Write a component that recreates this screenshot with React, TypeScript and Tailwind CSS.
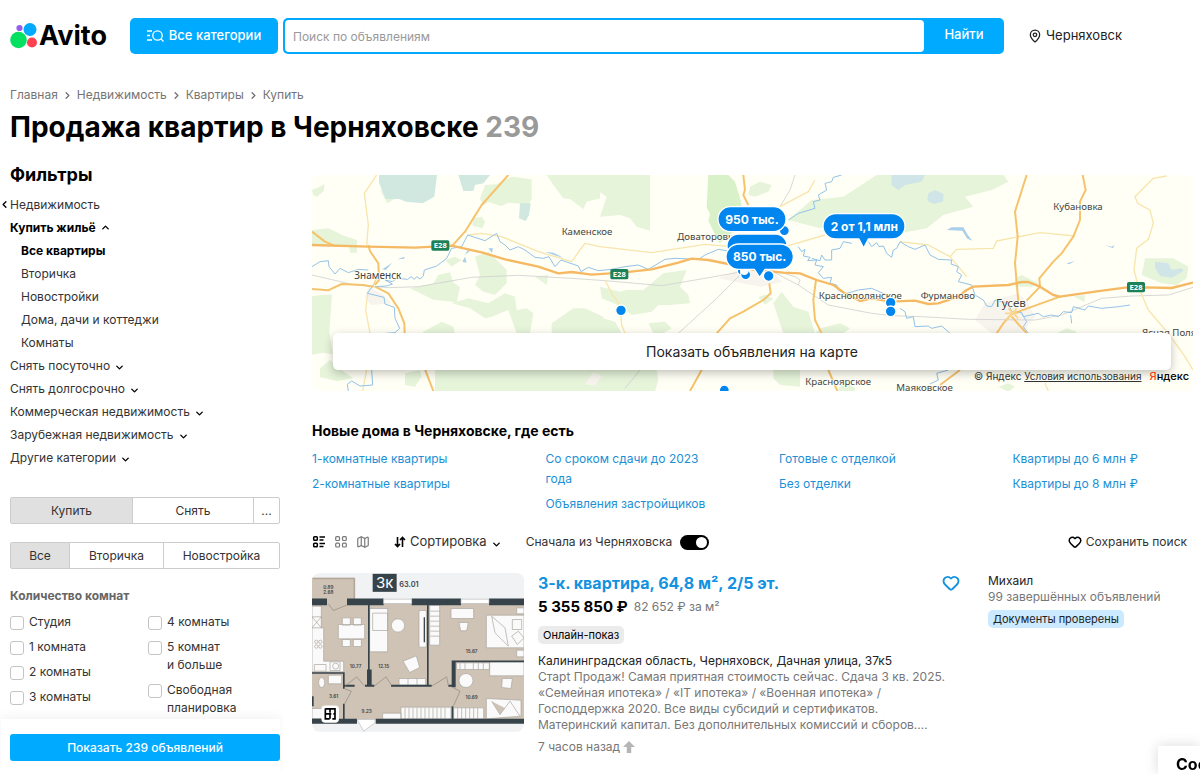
import { ChevronDown, ChevronLeft, ChevronRight, ChevronUp, Heart, Map, MapPin } from 'lucide-react'

const crumbs = ['Главная', 'Недвижимость', 'Квартиры', 'Купить']

const subcategories = ['Вторичка', 'Новостройки', 'Дома, дачи и коттеджи', 'Комнаты']

const categories = [
  'Снять посуточно',
  'Снять долгосрочно',
  'Коммерческая недвижимость',
  'Зарубежная недвижимость',
  'Другие категории',
]

const rooms = [
  ['Студия', '1 комната', '2 комнаты', '3 комнаты'],
  ['4 комнаты', '5 комнат и\u00a0больше', 'Свободная планировка'],
]

const houseLinks = [
  ['1-комнатные квартиры', '2-комнатные квартиры'],
  ['Со сроком сдачи до 2023 года', 'Объявления застройщиков'],
  ['Готовые с отделкой', 'Без отделки'],
  ['Квартиры до 6 млн ₽', 'Квартиры до 8 млн ₽'],
]

function Header() {
  return (
    <header className="flex h-[72px] items-center pl-[10px]">
      <a href="#" className="flex w-[120px] items-center gap-[2px]">
        <svg viewBox="0 0 27 26" className="h-[26px] w-[27px] shrink-0">
          <circle cx="8.5" cy="17" r="8.3" fill="#04e061" />
          <circle cx="20" cy="6.5" r="6.5" fill="#00aaff" />
          <circle cx="22" cy="19.5" r="5" fill="#ff4053" />
          <circle cx="9.5" cy="5" r="3.1" fill="#965eeb" />
        </svg>
        <span className="text-[27px] leading-8 font-bold">Avito</span>
      </a>
      <button className="flex h-9 w-[148px] items-center justify-center gap-[5px] rounded-[5px] bg-[#00aaff] text-[13px] font-medium text-white">
        <svg viewBox="0 0 17 14" className="h-[14px] w-[17px]" fill="none" stroke="currentColor" strokeWidth="1.3">
          <path d="M0 2h5M0 6.5h3M0 11h5" />
          <circle cx="10.5" cy="6.5" r="4.7" />
          <path d="m14 10 2.5 2.5" />
        </svg>
        Все категории
      </button>
      <form className="ml-[5px] flex h-9 flex-1 rounded-[5px] bg-[#00aaff] p-[2px] pr-0">
        <input
          aria-label="Поиск"
          placeholder="Поиск по объявлениям"
          className="min-w-0 flex-1 rounded-[4px] bg-white px-2 pt-[2px] text-[12px] outline-none placeholder:text-[#999]"
        />
        <button type="button" className="w-20 pb-[2px] text-[13px] font-medium text-white">
          Найти
        </button>
      </form>
      <a href="#" className="ml-6 flex w-[172px] items-center gap-1 text-[13px] text-[#222]">
        <MapPin className="h-[14px] w-[14px]" strokeWidth={2.2} />
        Черняховск
      </a>
    </header>
  )
}

function Sidebar() {
  return (
    <aside className="mt-px flex w-[270px] shrink-0 flex-col text-[12px] text-[#333]">
      <h2 className="text-[18px] leading-7 font-bold text-black">Фильтры</h2>
      <nav className="mt-1 flex flex-col leading-[23px]">
        <a href="#" className="-ml-[11px] flex items-center">
          <ChevronLeft className="h-[11px] w-[11px] text-black" strokeWidth={3} />
          Недвижимость
        </a>
        <a href="#" className="flex items-center gap-1 font-bold text-black">
          Купить жильё
          <ChevronUp className="h-[11px] w-[11px]" strokeWidth={3} />
        </a>
        <a href="#" className="pl-[11px] font-bold text-black">
          Все квартиры
        </a>
        {subcategories.map((name) => (
          <a key={name} href="#" className="pl-[11px]">
            {name}
          </a>
        ))}
        {categories.map((name) => (
          <a key={name} href="#" className="flex items-center gap-1">
            {name}
            <ChevronDown className="mt-1 h-[11px] w-[11px] text-black" strokeWidth={3} />
          </a>
        ))}
      </nav>

      <div className="mt-7 flex h-[27px] rounded-[2px] border border-[#ccc]">
        <button className="flex-1 border-r border-[#ccc] bg-[#e0e0e0]">Купить</button>
        <button className="w-[120px]">Снять</button>
        <button className="w-[26px] border-l border-[#ccc]">...</button>
      </div>
      <div className="mt-[18px] flex h-[27px] rounded-[2px] border border-[#ccc]">
        <button className="w-[58px] bg-[#e0e0e0]">Все</button>
        <button className="w-[95px] border-x border-[#ccc]">Вторичка</button>
        <button className="flex-1">Новостройка</button>
      </div>

      <h3 className="mt-[17px] leading-5 font-bold text-[#666]">Количество комнат</h3>
      <div className="mt-[7px] flex leading-[18px]">
        {rooms.map((column) => (
          <div key={column[0]} className="flex w-[138px] shrink-0 flex-col gap-[7px]">
            {column.map((name) => (
              <label key={name} className="flex items-start gap-[5px]">
                <input
                  type="checkbox"
                  className="mt-[3px] h-[14px] w-[14px] shrink-0 appearance-none rounded-[3px] border border-[#c4c4c4]"
                />
                <span className="max-w-[84px]">{name}</span>
              </label>
            ))}
          </div>
        ))}
      </div>
      <div className="mt-[2px] -ml-[9px] bg-white pt-[15px] pb-3 pl-[9px] shadow-[0_-4px_8px_rgba(0,0,0,0.04)]">
        <button className="h-[27px] w-full rounded-[3px] bg-[#00aaff] font-medium text-white">
          Показать 239 объявлений
        </button>
      </div>
    </aside>
  )
}

function RoadSign({ x, y }: { x: number; y: number }) {
  return (
    <g>
      <rect x={x} y={y} width="54" height="31" rx="5" fill="#1c8158" />
      <text x={x + 27} y={y + 24} fontSize="23" fontWeight="700" fill="#fff" textAnchor="middle">
        E28
      </text>
    </g>
  )
}

function MapDrawing() {
  return (
    <svg
      viewBox="21 15 2643 648"
      preserveAspectRatio="xMidYMid slice"
      className="h-full w-full font-['Noto_Sans',sans-serif]"
      fill="none"
      strokeLinejoin="round"
    >
      <rect x="21" y="15" width="2643" height="648" fill="#fffff5" />

      {/* forests */}
      <g fill="#e6f4da">
        <path d="M21 60l20-8 18-10-3 22-20 16-12-5zM21 180l50-5 40 20 45 15v38h-20l-5-22-110-4zM21 378l60-5-8 110 10 70-30-5-32 6zM45 595l30-25 20 20 50 35-50 8-50-12z" />
        <path d="M225 60l22 40 20-12zM540 45l35-2 45-23 60 8v60l-10 15-60-5-20 10-40-12-15 10-10-20zM725 15h160v70l-40 10-10 22-40-30-20-2-30-40zM505 145l25-5 10 15-8 20-30-8z" />
        <path d="M315 355l70-15 15-25 35-8 10 30 20 15-10 45-70-8zM420 270l30-10 20 10-30 20zM510 260l40-15 35 35 20 20v40l-35 35-35-10-25-20 15-30zM440 400l50-15 60 15 50-30 30 10 5 40 30-5 20 15-10 60h-40l-25-70-50 20-20 5-45-30zM690 320l40-5-5 30zM740 460l65-45h35l55 25v50H740zM355 485l55-30 35 15 5 25h-100z" />
        <path d="M300 610l45-10 5 20-20 30-30-5zM390 598h495v65H390z" />
        <path d="M870 15h165v167l-40-12-20-25-30-10-60 5 20-60-30-20zM885 350l60 15 20-5 50 0 60-50 70-10-20 50 25 25 5 25-65 5-30 0-20 20-60 10-30-25-60-25zM1030 460l50-5 20 20-25 15h-30zM885 455l10-10 35 10 20 35h-65zM885 600h170l5 30-10 33H885z" />
        <path d="M1335 50l30-15 35 10-10 20-40 15-20-5zM1360 382l20-8 25 12-25 18zM1405 400l25-35 35 45 45 15 20 65h-95zM1530 490l15-15 60-15 30 15-20 15z" />
        <path d="M1450 150l70-60 95-10 100-65h380l15 20-50 25-80 20 25 30-90 25-50 40-80 15-60-15-20-15-90-10-70 25z" />
        <path d="M2130 325l20-10 50 25-20 10h-50zM2255 490l30-15 30 10-5 8zM2520 265h85l45 25-5 35-30 20-45-5-60-25zM2305 378l35-3-2 22z" />
        <path d="M1405 600h80v50l-60-5-20-20zM1600 655l20-20 30 20v8h-50zM2080 650l30-10 20 10-20 15z" />
      </g>
      <path fill="#d9f1c8" d="M1210 15h60l20 20 15 50 8 35-20 60-50 40-33-68 5-20-10-20z" />
      <path fill="#d0e8df" d="M222 15h174l-8 65-35 20-50-5-20-8-40 0-10-20-11-30zM460 15h95l-20 25-25 5-5 18-30 0zM645 100h32l-5 35-10 18-20-8z" />
      <path fill="#cfe5e8" d="M1760 15h100l-10 20-50 10-20 15-20-15zM1870 70l20-10 25 12v22l-28 8-20-10zM2550 275l40 5 10 20 30-5 5 8-35 20-35-5-15-25z" />
      <path
        fill="#f7f4ee"
        d="M190 350l40 20 30 30-60 5-20-20zM1240 325l60-25 110 10 20 25-60 15-60-10zM2010 450l30-50 100-30 30 30 20 40-40 50h-90zM865 607l25 10-20 30-30-5z"
      />

      {/* railways */}
      <g stroke="#d0d0d0" strokeWidth="2.5">
        <path d="M21 315L150 345 250 353 340 350 500 322 640 316 800 325 900 332 1070 347 1200 325 1300 307" />
        <path d="M1410 308L1480 345 1570 405 1700 430 1760 437 1850 440 1990 448 2190 450 2270 435 2390 385 2480 378 2590 375 2664 352" />
        <path d="M1120 490L1235 385 1310 310M1420 305l50 15 15 10-5 15M1470 15l-15 45-30 50M960 655l45-55" />
      </g>

      {/* secondary roads */}
      <g stroke="#f8e5ae" strokeWidth="4">
        <path d="M215 15L178 70 190 165 185 225M188 370L182 420 195 490M185 598L173 663M490 195L530 190 590 200 700 245 800 275 825 240 840 220 885 230 1040 248 1200 223 1280 230M900 330L920 370 945 405 950 465 960 490" />
        <path d="M1425 110L1510 65 1530 30M1440 230L1560 195M1785 215L1870 225 1935 260 1985 320M1935 260L1955 238 2065 235 2075 213 2205 188 2310 198M2585 18L2545 25 2490 80 2498 100 2535 120 2545 160 2530 208 2495 235 2487 300 2500 350 2530 420 2590 490 2640 560 2664 600M2220 640L2230 663" />
      </g>

      {/* rivers */}
      <g stroke="#93c2e8" strokeWidth="3">
        <path d="M21 290L45 275 70 272 72 290 90 312 105 295 130 308 160 298 190 300" />
        <path d="M205 345L187 370 237 382 240 402 268 412 270 445 284 475 270 488 240 490M200 598L203 645 165 648 140 633 127 643 130 663" />
        <path d="M210 350L245 348 262 342 240 330 262 335 275 325 308 328 318 320 328 328 335 320 345 327 355 318 358 300 395 288 425 265 440 235 470 230 488 195 540 212 575 190 585 215 600 225 615 240 640 230 660 240 690 262 715 265 732 260 750 290 768 270 820 288 828 305 850 292 880 302 920 298 960 290 1000 285 1030 298 1080 268 1110 265 1180 268 1200 255 1240 238 1270 243" />
        <path d="M1450 150L1480 130 1530 115 1525 95 1545 90 1540 75 1565 60 1560 40 1580 35 1585 22 1610 15" />
        <path d="M1480 230L1490 245 1500 238 1495 258 1515 262 1508 272 1535 270 1530 285 1555 290 1540 308 1555 325 1580 322 1575 340 1595 345 1600 360 1620 372 1660 360 1700 355 1757 380" />
        <path d="M1520 265L1545 272 1550 255 1560 270 1580 270 1580 240 1605 235 1615 215 1640 220M1690 215L1700 230 1715 218 1722 230 1735 228 1745 250 1760 262 1765 240 1775 235 1785 215 1810 230 1830 238 1860 225 1875 255 1900 268 1940 270 1938 282 1960 290 1955 305 1970 315 1960 335 1980 340 2000 345 2010 375 2035 390 2045 408 2060 410 2070 390 2110 400 2120 425" />
        <path d="M2120 425L2150 428 2155 440 2200 430 2215 440 2240 435 2260 440 2275 425 2300 428 2305 410 2340 420 2350 408 2390 415 2440 410 2475 405M2150 430L2165 455 2155 470 2170 490M2297 435L2300 460M1785 415L1800 425 1805 445 1825 440 1830 470 1870 468 1880 475 1910 468 1935 490M1930 600L1895 610 1900 630 1875 642" />
      </g>
      <path
        fill="#a9cfea"
        d="M232 298l30-20-20 22zM278 268l20-8v6zM472 275l8-15 5 18zM480 255l8-15 12-2zM550 235l14 0-3 14zM720 245l25 3 30 15-20-5zM1925 180l15-8 35 0 15 25 12 15-15-6-15-24zM2285 280l25-7-18 10zM2400 225l20 5 8-4-4 9z"
      />

      {/* highways */}
      <g stroke="#f6c36d" strokeWidth="6">
        <path d="M610 15L530 105 480 185 442 227M21 185L60 215 86 226M190 225L195 243 220 280 222 330 210 345M21 357L69 361 110 342 175 345 205 350M210 350L250 370 280 415 298 460 299 490M360 598L385 663" />
        <path d="M1315 15L1320 60 1315 75 1330 105M1393 340L1397 370 1375 390 1315 425 1275 445 1235 490M1533 330L1525 390 1530 450 1550 490M1190 600L1155 663M1570 600L1597 663" />
        <path d="M2165 15L2130 125 2138 200 2130 280 2140 395M2333 15L2342 60 2325 95 2325 150 2305 200 2270 250 2245 275 2203 325 2205 350 2165 392M2265 380L2120 432 2095 460 2075 490M2120 440L2165 490M1965 600L1905 645" />
      </g>
      <path
        stroke="#f5b964"
        strokeWidth="7"
        d="M21 225L190 230 330 233 440 227 530 247 600 268 700 290 760 310 800 306 860 314 950 308 1040 298 1120 278 1160 266 1210 270 1270 282 1350 300 1435 308 1485 310 1535 330 1585 345 1620 370 1665 393 1700 385 1757 395 1830 392 1870 402 1900 400 1960 380 1985 360 2005 350 2110 345 2150 336 2170 336 2205 350 2245 375 2265 380 2370 365 2460 353 2520 352 2600 354 2664 338"
      />
      <path stroke="#f9d78e" strokeWidth="5" d="M215 325l-10 20M2100 430h40M2110 415l30 30M2135 415l-30 35" />

      <g fill="#444" stroke="#fffff5" strokeWidth="4" paintOrder="stroke" fontSize="29">
        <text x="148" y="326" fontSize="30">Знаменск</text>
        <text x="770" y="196">Каменское</text>
        <text x="1117" y="210">Доваторовка</text>
        <text x="1541" y="386">Краснополянское</text>
        <text x="1847" y="388">Фурманово</text>
        <text x="2073" y="411" fontSize="35">Гусев</text>
        <text x="2245" y="120">Кубановка</text>
        <text x="2511" y="499">Ясная Поляна</text>
        <text x="1501" y="646">Красноярское</text>
        <text x="1774" y="664">Маяковское</text>
      </g>
      <RoadSign x={379} y={211} />
      <RoadSign x={916} y={297} />
      <RoadSign x={2466} y={336} />

      {/* price pins */}
      <g fill="#0086ee" stroke="#fff" strokeWidth="4">
        <circle cx="1438" cy="182" r="15" />
        <circle cx="1312" cy="302" r="15" />
        <circle cx="1322" cy="314" r="15" />
        <circle cx="1318" cy="302" r="11" fill="#fff" />
        <circle cx="1391" cy="318" r="16" />
        <circle cx="948" cy="421" r="16" />
        <circle cx="1757" cy="398" r="16" />
        <circle cx="1757" cy="424" r="16" />
        <circle cx="1258" cy="660" r="15" />
        <rect x="1239" y="110" width="204" height="75" rx="37" />
        <rect x="1266" y="192" width="180" height="70" rx="35" />
        <path d="M1301 222h126a38 38 0 0 1 0 76h-47l-16 24-16-24h-47a38 38 0 0 1 0-76z" />
        <path d="M1592 131h170a38 38 0 0 1 0 76h-72l-14 27-14-27h-70a38 38 0 0 1 0-76z" />
      </g>
      <g fill="#fff" fontSize="36" fontWeight="700" textAnchor="middle" className="font-[Inter,sans-serif]">
        <text x="1341" y="161">950 тыс.</text>
        <text x="1364" y="273">850 тыс.</text>
        <text x="1678" y="182">2 от 1,1 млн</text>
      </g>
    </svg>
  )
}

function MapPanel() {
  return (
    <section className="relative h-[216px] overflow-hidden rounded-md">
      <MapDrawing />
      <button className="absolute right-[22px] bottom-[21px] left-[21px] h-[37px] rounded-[5px] bg-white text-[14px] text-[#222] shadow-[0_3px_10px_rgba(0,0,0,0.25)]">
        Показать объявления на карте
      </button>
      <p className="absolute right-1 bottom-[7px] flex items-center gap-2 text-[10px] leading-4 text-[#333]">
        <span>
          © Яндекс{' '}
          <a href="#" className="underline">
            Условия использования
          </a>
        </span>
        <b className="text-[11px] font-medium text-black">
          <span className="text-[#fc3f1d]">Я</span>ндекс
        </b>
      </p>
    </section>
  )
}

function Toolbar() {
  return (
    <div className="mt-[17px] flex h-[22px] items-center text-[12px] text-[#333]">
      <button aria-label="Список" className="text-black">
        <svg viewBox="0 0 14 14" className="h-[14px] w-[14px]" fill="none" stroke="currentColor" strokeWidth="1.5">
          <rect x="1.7" y="1.7" width="3.6" height="3.6" rx=".8" />
          <rect x="1.7" y="8.2" width="3.6" height="3.6" rx=".8" />
          <path d="M7.5 2H13M7.5 5H11.5M7.5 8.5H13M7.5 11.5H11.5" />
        </svg>
      </button>
      <button aria-label="Плитка" className="ml-2 text-[#777]">
        <svg viewBox="0 0 14 14" className="h-[14px] w-[14px]" fill="none" stroke="currentColor" strokeWidth="1.2">
          <rect x="1.7" y="1.7" width="3.8" height="3.8" rx="1" />
          <rect x="8.5" y="1.7" width="3.8" height="3.8" rx="1" />
          <rect x="1.7" y="8.2" width="3.8" height="3.8" rx="1" />
          <rect x="8.5" y="8.2" width="3.8" height="3.8" rx="1" />
        </svg>
      </button>
      <button aria-label="Карта" className="ml-2 text-[#777]">
        <Map className="h-[14px] w-[14px]" />
      </button>
      <button className="ml-6 flex items-center gap-1 text-[13px]">
        <svg viewBox="0 0 12 12" className="h-3 w-3 text-black" fill="none" stroke="currentColor" strokeWidth="1.6">
          <path d="M3.5 1v9.5M1 8l2.5 2.5L6 8M8.5 11V1.5M6 4l2.5-2.5L11 4" />
        </svg>
        Сортировка
        <ChevronDown className="mt-1 h-[11px] w-[11px] text-black" strokeWidth={3} />
      </button>
      <label className="ml-6 flex items-center gap-2">
        Сначала из Черняховска
        <input
          type="checkbox"
          role="switch"
          defaultChecked
          className="relative h-[15px] w-[29px] appearance-none rounded-full bg-black after:absolute after:top-[2px] after:right-[2px] after:h-[11px] after:w-[11px] after:rounded-full after:bg-white"
        />
      </label>
      <button className="mr-[6px] ml-auto flex items-center gap-1">
        <Heart className="h-[14px] w-[14px] text-black" strokeWidth={2.6} />
        Сохранить поиск
      </button>
    </div>
  )
}

function FloorPlan() {
  return (
    <svg viewBox="21 26 636 476" className="h-full w-full font-[Inter,sans-serif]" fill="none">
      <rect x="21" y="26" width="636" height="476" fill="#f1f2f3" />
      <path fill="#cfc3b5" d="M21 40h127v75h509v350H21z" />
      <path d="M150 26h507v80H150z" fill="#f1f2f3" />
      <path d="M21 42h127v68" stroke="#b2a79b" strokeWidth="5" />

      {/* furniture */}
      <g fill="#fafafa" stroke="#a8a39c" strokeWidth="2">
        <path d="M21 125h28v65h7v100h60v32H21zM100 180h79v43h-79zM112 160h24v22h-24zM145 160h24v22h-24zM112 225h24v21h-24zM145 225h24v21h-24z" />
        <path d="M21 157h28v33H21l28-33M21 157l28 33M28 300h35v20H28zM75 292h30v26H75zM70 332h40v26H70zM21 432h32v30H21z" />
        <circle cx="92" cy="305" r="9" />
        <circle cx="34" cy="232" r="5" />
        <circle cx="46" cy="232" r="5" />
        <circle cx="34" cy="246" r="5" />
        <circle cx="46" cy="246" r="5" />
        <ellipse cx="50" cy="354" rx="9" ry="15" />
        <path d="M194 132h54v130h-54zM203 146h45v52h-45zM342 138h22v110h-22zM294 290l40-16 10 35-30 15zM282 342h80v20h-80zM374 122h30v120h-30zM438 132h68v30h-68zM462 174h28l-5 25h-18z" />
        <path d="M544 152h113v98H544zM560 155l40 35 10 55-40-40zM622 165h28v30h-28zM620 215l20-15 17 20-20 20zM635 130h22v18h-22zM635 257h22v20h-22zM455 295h98v20h-98zM554 292h103v42H554zM592 342l30 0-4 30-28-3zM544 402l104 5v48l-104 8zM560 410l25 40 30-40 30 45" />
        <circle cx="279" cy="183" r="20" />
        <circle cx="483" cy="348" r="21" />
        <path d="M233 446h55v18h-55zM288 428h150v35H288zM446 430h90v33h-90z" />
      </g>
      <g stroke="#a8a39c" strokeWidth="2">
        <path d="M300 430v32M312 430v32M324 430v32M336 430v32M348 430v32M360 430v32M372 430v32M384 430v32M396 430v32M408 430v32M420 430v32M458 431v32M470 431v32M482 431v32M494 431v32M506 431v32M518 431v32M376 140h28M376 155h28M376 170h28M376 185h28M376 200h28M376 215h28M465 296v18M480 296v18M505 296v18M520 296v18M535 296v18M309 343v18M336 343v18" />
      </g>
      <path d="M358 158v75" stroke="#3d4750" strokeWidth="4" />

      {/* walls */}
      <g fill="#37434b">
        <path d="M21 102h45v20H21zM126 102h110v20H126zM320 102h148v20H320zM552 102h105v20H552zM21 463h135v15H21zM212 463h445v15H212z" />
        <path d="M189 115h5v250h-5zM186 315h14v50h-14zM366 115h5v250h-5zM21 323h97v5H21zM114 323h5v50h-5zM114 418h5v47h-5zM119 361h30v6h-30zM180 361h28v6h-28zM258 361h122v6H258zM430 361h16v6h-16zM440 288h217v5H440zM440 288h12v80h-12zM440 425h5v40h-5zM21 395h5v30h-5z" />
      </g>
      <path fill="#fff" stroke="#b9babb" strokeWidth="2" d="M236 104h84v13h-84zM468 104h84v13h-84zM156 465l20 35 34-25v-10z" />
      <g stroke="#8d877f" strokeWidth="2">
        <path d="M70 118l15 20 40-16M120 365l35-28 22 26M208 365l35-28 17 26M380 365l45-28 5 26M119 418l20-38-20-7M445 425l20-45-20-10" />
      </g>

      <rect x="203" y="28" width="72" height="54" fill="#37434b" />
      <text x="239" y="71" fontSize="45" fill="#fff" textAnchor="middle">3к</text>
      <g fill="#3d4245" fontSize="14" fontWeight="600" textAnchor="middle">
        <text x="312" y="66" fontSize="22">63.01</text>
        <text x="70" y="72">0.89</text>
        <text x="70" y="88">2.68</text>
        <text x="152" y="311">10.77</text>
        <text x="236" y="311">12.15</text>
        <text x="500" y="265">15.67</text>
        <text x="500" y="403">10.69</text>
        <text x="86" y="400">3.61</text>
        <text x="185" y="444">9.23</text>
      </g>
      <rect x="49" y="423" width="53" height="52" rx="12" fill="#fff" />
      <path d="M61 433h29v30h-8M74 463H61v-31M75 433v12M61 448h18M75 448v15M90 448h-5" stroke="#000" strokeWidth="5" />
    </svg>
  )
}

function Listing() {
  return (
    <article className="mt-5 flex text-[12px]">
      <a href="#" aria-label="Планировка" className="h-[159px] w-[212px] shrink-0 overflow-hidden rounded-lg">
        <FloorPlan />
      </a>
      <div className="ml-[14px] min-w-0 flex-1">
        <div className="flex items-center justify-between">
          <a href="#" className="text-[16px] leading-5 font-bold text-[#1292e0]">
            3-к. квартира, 64,8 м², 2/5 эт.
          </a>
          <button aria-label="В избранное" className="text-[#1292e0]">
            <Heart className="h-[18px] w-[18px]" strokeWidth={2.4} />
          </button>
        </div>
        <p className="mt-1 flex items-center gap-[6px] leading-5">
          <b className="text-[15px]">5 355 850 ₽</b>
          <span className="text-[#777]">82 652 ₽ за м²</span>
        </p>
        <p className="mt-[9px] w-fit rounded-[5px] bg-[#ebebeb] px-[5px] text-[11px] leading-[18px]">Онлайн-показ</p>
        <p className="mt-[9px] leading-4 text-[#222]">Калининградская область, Черняховск, Дачная улица, 37к5</p>
        <p className="leading-4 text-[#777]">
          Старt Продаж! Самая приятная стоимость сейчас. Сдача 3 кв. 2025.
          <br />
          «Семейная ипотека» / «IT ипотека» / «Военная ипотека» /
          <br />
          Господдержка 2020. Все виды субсидий и сертификатов.
          <br />
          Материнский капитал. Без дополнительных комиссий и сборов.…
        </p>
        <p className="mt-[6px] flex items-center gap-[3px] text-[12px] leading-4 text-[#777]">
          7 часов назад
          <svg viewBox="0 0 12 12" className="h-3 w-3" fill="#b5b5b5">
            <path d="M6 0l6 6H8.2v6H3.8V6H0z" />
          </svg>
        </p>
      </div>
      <div className="ml-7 w-[205px] shrink-0 leading-4">
        <a href="#" className="block text-[#222]">
          Михаил
        </a>
        <p className="text-[#777]">99 завершённых объявлений</p>
        <p className="mt-[5px] w-fit rounded-[5px] bg-[#cbe9ff] px-[5px] text-[11px] leading-[18px] text-[#222]">
          Документы проверены
        </p>
      </div>
    </article>
  )
}

export default function App() {
  return (
    <div className="h-screen overflow-hidden bg-white font-[Inter,'Noto_Sans',sans-serif] text-black">
      <Header />
      <div className="pt-[13px] pr-[7px] pl-[10px]">
        <nav className="flex items-center gap-1 text-[12px] leading-5 text-[#757575]">
          {crumbs.map((name, i) => (
            <span key={name} className="flex items-center gap-1">
              {i > 0 && <ChevronRight className="h-[11px] w-[11px]" strokeWidth={3} />}
              <a href="#">{name}</a>
            </span>
          ))}
        </nav>
        <h1 className="mt-1 text-[28px] leading-9 font-bold">
          Продажа квартир в Черняховске <span className="text-[#999]">239</span>
        </h1>
        <div className="mt-[15px] flex gap-8">
          <Sidebar />
          <main className="mt-[15px] min-w-0 flex-1">
            <MapPanel />
            <h2 className="mt-[30px] text-[14px] leading-5 font-bold">Новые дома в Черняховске, где есть</h2>
            <div className="mt-2 grid grid-cols-4 gap-x-[53px] text-[12px] leading-5 text-[#1c90d6]">
              {houseLinks.map((column) => (
                <div key={column[0]} className="flex flex-col gap-[5px]">
                  {column.map((name) => (
                    <a key={name} href="#" className="max-w-[165px]">
                      {name}
                    </a>
                  ))}
                </div>
              ))}
            </div>
            <Toolbar />
            <Listing />
          </main>
        </div>
      </div>
      <button className="fixed right-0 bottom-0 h-7 w-[42px] overflow-hidden bg-white pt-2 pl-[18px] text-left text-[16px] leading-5 font-bold whitespace-nowrap shadow-[0_0_14px_rgba(0,0,0,0.15)]">
        Сообщения
      </button>
    </div>
  )
}
